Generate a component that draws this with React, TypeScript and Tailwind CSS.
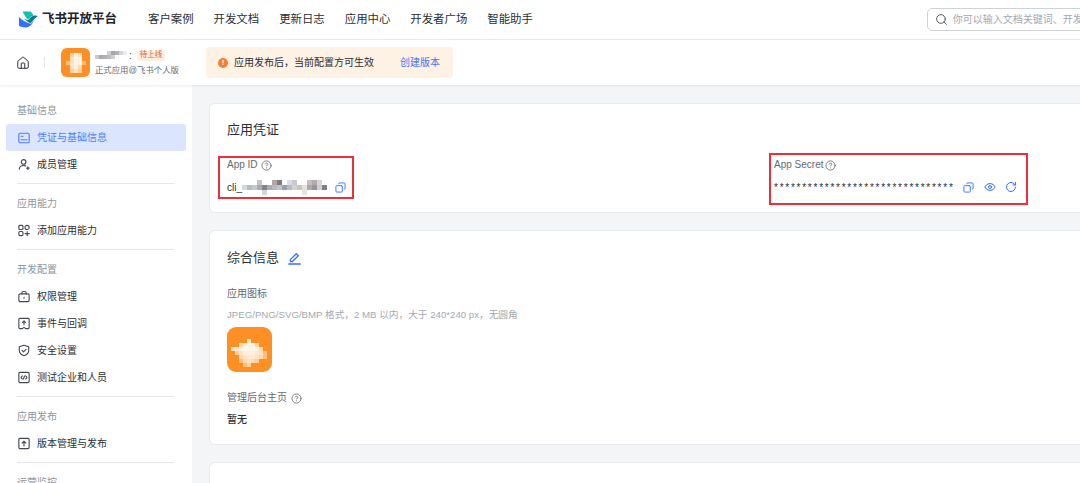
import React, { type ReactNode } from 'react'
import { Copy, Eye, RotateCw, CircleHelp, Search, House } from 'lucide-react'

const FONT = "font-['Liberation_Sans','Noto_Sans_CJK_SC',sans-serif]"

const Stroke = ({ children, className }: { children: ReactNode; className?: string }) => (
  <svg
    viewBox="0 0 14 14"
    fill="none"
    stroke="currentColor"
    strokeWidth="1.3"
    strokeLinecap="round"
    strokeLinejoin="round"
    className={className ?? 'w-[14px] h-[14px]'}
  >
    {children}
  </svg>
)

const Logo = () => (
  <svg viewBox="0 0 20 17" className="w-[20px] h-[17px] shrink-0">
    <path d="M4.500 0.500h8c1.500 1.200 2.400 2.600 3 4.300-1.500 0.300-2.700 1.100-3.700 2.100L10 8.700C8 6.500 6.200 3.600 4.500 0.500z" fill="#14c0b0" />
    <path d="M6 7.500c2 2.200 4 3.700 6.500 4.800 1.300-0.900 2.500-2.300 3.500-3.800L19.800 5c-1.400-0.600-3-0.700-4.500-0.200-1.500 0.500-2.700 1.800-3.700 2.900L10 9.300z" fill="#0e7e8e" />
    <path d="M1 6c3 3.200 6.700 5.200 11.500 6.800 1.400-0.600 2.500-2.200 3.500-4.300-1.200 4.200-3.800 8-8.400 8-2.500 0-4.800-0.600-6.600-1.700z" fill="#3370ff" />
  </svg>
)

const Mosaic = ({ cells, size, className }: { cells: [number, number, string][]; size: number; className?: string }) => (
  <svg className={className} style={{ filter: 'blur(0.5px)' }}>
    {cells.map(([x, y, c], i) => (
      <rect key={i} x={x * size} y={y * size} width={size} height={size} fill={c} />
    ))}
  </svg>
)

const idCells: [number, number, string][] = [
  [0, 1, '#d4d7dd'], [1, 1, '#b9bdc4'], [2, 1, '#c6c9ce'], [3, 1, '#a9adb3'], [3, 0, '#c2c4c9'], [4, 1, '#7f838a'], [4, 2, '#d3d6db'],
  [5, 1, '#a7abb2'], [6, 1, '#b6b9c0'], [6, 0, '#b0a7a5'], [7, 0, '#7f7a7a'], [7, 1, '#c3c6c8'], [8, 1, '#93a2ab'], [9, 1, '#b2bdc6'], [9, 0, '#dcdce4'],
  [10, 0, '#c8c8d2'], [10, 1, '#d4d4cf'], [11, 1, '#c9c6c0'], [12, 1, '#e4e0dc'], [12, 2, '#e4e4e4'], [13, 0, '#c4bfbf'], [14, 0, '#b4acac'],
  [13, 1, '#aea8a8'], [14, 1, '#99959a'], [15, 1, '#cfd0d6'], [16, 1, '#7d8087'], [15, 0, '#d4d4d8'],
]

const bigIcon: [number, number, string][] = [
  [5, 3, '#fde3c4'], [3, 4, '#fcd9ae'], [4, 4, '#fff1e0'], [5, 4, '#fff3e6'], [6, 4, '#fff1e0'], [7, 4, '#fcd9ae'],
  [1, 5, '#fde3c4'], [2, 5, '#fde8d2'], [3, 5, '#fff1e0'], [4, 5, '#fff7ee'], [5, 5, '#fff7ee'], [6, 5, '#fff7ee'], [7, 5, '#fff1e0'], [8, 5, '#fcd9ae'],
  [2, 6, '#fbcf9c'], [3, 6, '#fde3c4'], [4, 6, '#fff1e0'], [5, 6, '#fff1e0'], [6, 6, '#fff1e0'], [7, 6, '#fde8d2'], [8, 6, '#fde3c4'], [9, 6, '#fbbf7a'],
  [3, 7, '#fcd9ae'], [4, 7, '#fde3c4'], [5, 7, '#fde8d2'], [6, 7, '#fde8d2'], [7, 7, '#fde3c4'], [8, 7, '#fcd9ae'], [9, 7, '#fbbf7a'],
  [3, 8, '#fbbf7a'], [4, 8, '#fcd9ae'], [5, 8, '#fde3c4'], [6, 8, '#fcd9ae'], [7, 8, '#fbcf9c'],
  [4, 9, '#fbbf7a'], [5, 9, '#fbcf9c'],
]

const smallIcon: [number, number, string][] = [
  [0, 2, '#fbbf7a'], [4, 2, '#fbbf7a'], [1, 0, '#fbcf9c'], [2, 0, '#fff3e6'], [3, 0, '#fde3c4'],
  [1, 1, '#fde3c4'], [2, 1, '#fff3e6'], [3, 1, '#fff1e0'], [1, 2, '#fde3c4'], [2, 2, '#fff3e6'], [3, 2, '#fff1e0'],
  [1, 3, '#fde3c4'], [2, 3, '#fff1e0'], [3, 3, '#fcd9ae'], [1, 4, '#fbcf9c'], [2, 4, '#fde3c4'], [3, 4, '#fbcf9c'],
]

const nameCells: [number, number, string][] = [
  [0, 1, '#c8cacd'], [1, 1, '#a8aaae'], [2, 1, '#b0b2b6'], [3, 1, '#b8babd'], [3, 0, '#cfd1d4'], [4, 0, '#a4a6aa'], [4, 1, '#cdcfd2'],
  [5, 0, '#b0b2b6'], [6, 0, '#d4d6d8'], [7, 0, '#eceded'],
]

const NavItem = ({ icon, label, active }: { icon: ReactNode; label: string; active?: boolean }) => (
  <div
    className={`shrink-0 mx-[6px] h-[27px] pl-[12px] flex items-center gap-[7px] rounded-[3px] text-[10px] ${
      active ? 'bg-[#dbe5fe] text-[#4f7df6]' : 'text-[#2b2f36]'
    }`}
  >
    <span className={`w-[12px] flex justify-center ${active ? 'text-[#4f7df6]' : 'text-[#44484f]'}`}>{icon}</span>
    {label}
  </div>
)

const GroupLabel = ({ children }: { children: ReactNode }) => (
  <div className="shrink-0 h-[27px] pl-[17px] flex items-center text-[10px] text-[#8f959e]">{children}</div>
)

const Divider = () => <div className="shrink-0 mx-[17px] mt-[5px] mb-[6px] h-px w-[157px] bg-[#e4e6ea]" />

const Sidebar = () => (
  <aside className="w-[192px] shrink-0 bg-white pt-[12px] flex flex-col">
    <GroupLabel>基础信息</GroupLabel>
    <NavItem
      active
      label="凭证与基础信息"
      icon={
        <Stroke className="w-[12px] h-[12px]">
          <rect x="1" y="1.500" width="12" height="11" rx="1.500" />
          <path d="M3.500 5h2.500M3.500 9h7" />
        </Stroke>
      }
    />
    <NavItem
      label="成员管理"
      icon={
        <Stroke className="w-[13px] h-[13px]">
          <circle cx="6.500" cy="4" r="2.700" />
          <path d="M1.500 12.500c0-2.600 2-4.400 5-4.400 1 0 1.800 0.200 2.500 0.500M10 11.200h3M11.500 9.700v3" />
        </Stroke>
      }
    />
    <Divider />
    <GroupLabel>应用能力</GroupLabel>
    <NavItem
      label="添加应用能力"
      icon={
        <Stroke className="w-[13px] h-[13px]">
          <rect x="1" y="1" width="4.800" height="4.800" rx="1.200" />
          <circle cx="10.600" cy="3.400" r="2.400" />
          <rect x="1" y="8.200" width="4.800" height="4.800" rx="1.200" />
          <path d="M8.200 10.600h5M10.700 8.100v5" />
        </Stroke>
      }
    />
    <Divider />
    <GroupLabel>开发配置</GroupLabel>
    <NavItem
      label="权限管理"
      icon={
        <Stroke className="w-[13px] h-[13px]">
          <rect x="1" y="4" width="12" height="9" rx="1.500" />
          <path d="M4.500 4V2.600c0-0.800 0.600-1.400 1.400-1.400h2.200c0.800 0 1.400 0.600 1.400 1.400V4M7 8v1" />
        </Stroke>
      }
    />
    <NavItem
      label="事件与回调"
      icon={
        <Stroke className="w-[13px] h-[13px]">
          <path d="M1 2.200c0-0.600 0.500-1.200 1.200-1.200h9.600c0.700 0 1.200 0.600 1.200 1.200v9.600c0 0.700-0.500 1.200-1.200 1.200H9L7 11.500 5 13H2.200c-0.700 0-1.200-0.500-1.200-1.200z" />
          <path d="M7 8.500V4M5.300 5.700L7 4l1.700 1.700" />
        </Stroke>
      }
    />
    <NavItem
      label="安全设置"
      icon={
        <Stroke className="w-[13px] h-[13px]">
          <path d="M7 0.900l5.500 1.800v4.300c0 3-2.400 5-5.500 6.100-3.100-1.100-5.500-3.100-5.500-6.100V2.700z" />
          <path d="M4.700 6.900l1.700 1.700 3-3" />
        </Stroke>
      }
    />
    <NavItem
      label="测试企业和人员"
      icon={
        <Stroke className="w-[13px] h-[13px]">
          <rect x="1" y="1" width="12" height="12" rx="1.500" />
          <path d="M5 5.200L3.400 7 5 8.800M9 5.200L10.600 7 9 8.800M7.600 5.200L6.400 8.800" />
        </Stroke>
      }
    />
    <Divider />
    <GroupLabel>应用发布</GroupLabel>
    <NavItem
      label="版本管理与发布"
      icon={
        <Stroke className="w-[13px] h-[13px]">
          <rect x="1" y="1" width="12" height="12" rx="1.500" />
          <path d="M7 10V4.500M4.900 6.500L7 4.300l2.100 2.200" />
        </Stroke>
      }
    />
    <Divider />
    <GroupLabel>运营监控</GroupLabel>
  </aside>
)

const Help = () => <CircleHelp className="w-[11px] h-[11px] text-[#51565d]" strokeWidth={1.6} />

const Card = ({ children, className }: { children: ReactNode; className?: string }) => (
  <section className={`w-[900px] bg-white rounded-[6px] border border-[#e8eaed] ${className ?? ''}`}>{children}</section>
)

const CredentialCard = () => (
  <Card className="h-[110px] pl-[17px] pt-[17px] relative">
    <h2 className="text-[13px] leading-[18px] text-[#2b2f36]">应用凭证</h2>
    <div className="mt-[19px] flex">
      <div className="w-[547px]">
        <div className="flex items-center gap-[3px] text-[10px] leading-[14px] text-[#646a73]">
          App ID <Help />
        </div>
        <div className="mt-[8px] flex items-center h-[14px] text-[10px] text-[#2b2f36]">
          cli_
          <Mosaic cells={idCells} size={5} className="w-[85px] h-[15px]" />
          <Copy className="ml-[8px] w-[11px] h-[11px] text-[#3370ff] -scale-x-100" strokeWidth={2} />
        </div>
      </div>
      <div>
        <div className="flex items-center gap-[2px] text-[10px] leading-[14px] text-[#646a73]">
          App Secret <Help />
        </div>
        <div className="mt-[8px] flex items-center h-[14px] text-[#3370ff]">
          <span className="w-[189px] text-[10px] tracking-[1.750px] text-[#2b2f36]">
            ********************************
          </span>
          <Copy className="w-[11px] h-[11px] -scale-x-100" strokeWidth={2} />
          <Eye className="ml-[10px] w-[12px] h-[12px]" strokeWidth={2} />
          <RotateCw className="ml-[9px] w-[12px] h-[12px]" strokeWidth={2} />
        </div>
      </div>
    </div>
    {/* red annotation boxes drawn over the screenshot */}
    <div className="absolute left-[8px] top-[52px] w-[136px] h-[43px] border-2 border-[#ee2f3b]" />
    <div className="absolute left-[559px] top-[49px] w-[259px] h-[52px] border-2 border-[#ee2f3b]" />
  </Card>
)

const InfoCard = () => (
  <Card className="h-[215px] mt-[17px] pl-[17px] pt-[18px]">
    <div className="flex items-center gap-[9px]">
      <h2 className="text-[13px] leading-[18px] text-[#2b2f36]">综合信息</h2>
      <svg viewBox="0 0 14 14" fill="none" stroke="#3370ff" strokeWidth="1.400" strokeLinejoin="round" className="w-[13px] h-[13px]">
        <path d="M2.500 10.300V8.200L8.900 1.800l2.200 2.200-6.400 6.300z" />
        <path d="M0.800 12.900h12.400" strokeLinecap="round" />
      </svg>
    </div>
    <div className="mt-[20px] text-[10px] leading-[14px] text-[#646a73]">应用图标</div>
    <div className="mt-[7px] text-[9.670px] leading-[14px] text-[#a3a8b0]">
      JPEG/PNG/SVG/BMP 格式，2 MB 以内，大于 240*240 px，无圆角
    </div>
    <div className="mt-[5px] w-[45px] h-[45px] rounded-[9px] bg-[#fd8f25] overflow-hidden">
      <Mosaic cells={bigIcon} size={4} className="w-[45px] h-[45px]" />
    </div>
    <div className="mt-[19px] flex items-center gap-[4px] text-[10px] leading-[14px] text-[#646a73]">
      管理后台主页 <Help />
    </div>
    <div className="mt-[8px] text-[10px] leading-[14px] font-medium text-[#2b2f36]">暂无</div>
  </Card>
)

const TopBar = () => (
  <header className="h-[40px] shrink-0 bg-white border-b border-[#e8eaed] flex items-center pl-[18px] whitespace-nowrap">
    <Logo />
    <span className="ml-[4px] w-[106px] shrink-0 text-[12.500px] font-bold text-[#1f2329]">飞书开放平台</span>
    <nav className="flex shrink-0 gap-[20px] text-[11.400px] text-[#2b2f36]">
      {['客户案例', '开发文档', '更新日志', '应用中心', '开发者广场', '智能助手'].map(t => (
        <span key={t}>{t}</span>
      ))}
    </nav>
    <div className="ml-[394px] w-[200px] h-[23px] shrink-0 rounded-[5px] border border-[#d0d3d6] flex items-center pl-[7px] gap-[5px]">
      <Search className="w-[13px] h-[13px] shrink-0 text-[#51565d]" strokeWidth={1.8} />
      <span className="text-[10px] text-[#a3a8b0]">你可以输入文档关键词、开发者社区问题</span>
    </div>
  </header>
)

const AppBar = () => (
  <div className="h-[45px] shrink-0 bg-white shadow-[0_1px_2px_rgba(0,0,0,0.08)] flex items-center pl-[16px] relative z-10">
    <House className="w-[14px] h-[14px] text-[#2b2f36]" strokeWidth={1.7} />
    <div className="ml-[14px] w-px h-[11px] bg-[#e4e6ea]" />
    <div className="ml-[16px] w-[29px] h-[29px] rounded-[6px] bg-[#fd8f25] overflow-hidden flex items-center justify-center">
      <Mosaic cells={smallIcon} size={4} className="w-[20px] h-[20px]" />
    </div>
    <div className="ml-[5px] w-[111px]">
      <div className="flex items-center h-[14px]">
        <Mosaic cells={nameCells} size={4} className="w-[32px] h-[8px]" />
        <span className="ml-[2px] text-[10px] text-[#51565d]">:</span>
        <span className="ml-[5px] h-[11px] px-[3px] flex items-center rounded-[2px] bg-[#fdeee3] text-[7.500px] text-[#d9651f]">待上线</span>
      </div>
      <div className="mt-[2px] text-[8.400px] leading-[13px] whitespace-nowrap text-[#646a73]">正式应用@飞书个人版</div>
    </div>
    <div className="w-[247px] h-[31px] rounded-[4px] bg-[#fef2e5] flex items-center pl-[12px] text-[10px] text-[#2b2f36]">
      <span className="w-[10px] h-[10px] rounded-full bg-[#fb7f2a] flex items-center justify-center text-[8px] font-bold leading-none text-white">!</span>
      <span className="ml-[6px] w-[166px]">应用发布后，当前配置方可生效</span>
      <span className="text-[#3f74f5]">创建版本</span>
    </div>
  </div>
)

export default function App() {
  return (
    <div className={`w-[1080px] h-[483px] overflow-hidden flex flex-col bg-[#f4f5f7] ${FONT}`}>
      <TopBar />
      <AppBar />
      <div className="flex flex-1 min-h-0">
        <Sidebar />
        <main className="flex-1 pl-[17px] pt-[18px] min-w-0 overflow-hidden">
          <CredentialCard />
          <InfoCard />
          <Card className="h-[100px] mt-[17px]">{null}</Card>
        </main>
      </div>
    </div>
  )
}
